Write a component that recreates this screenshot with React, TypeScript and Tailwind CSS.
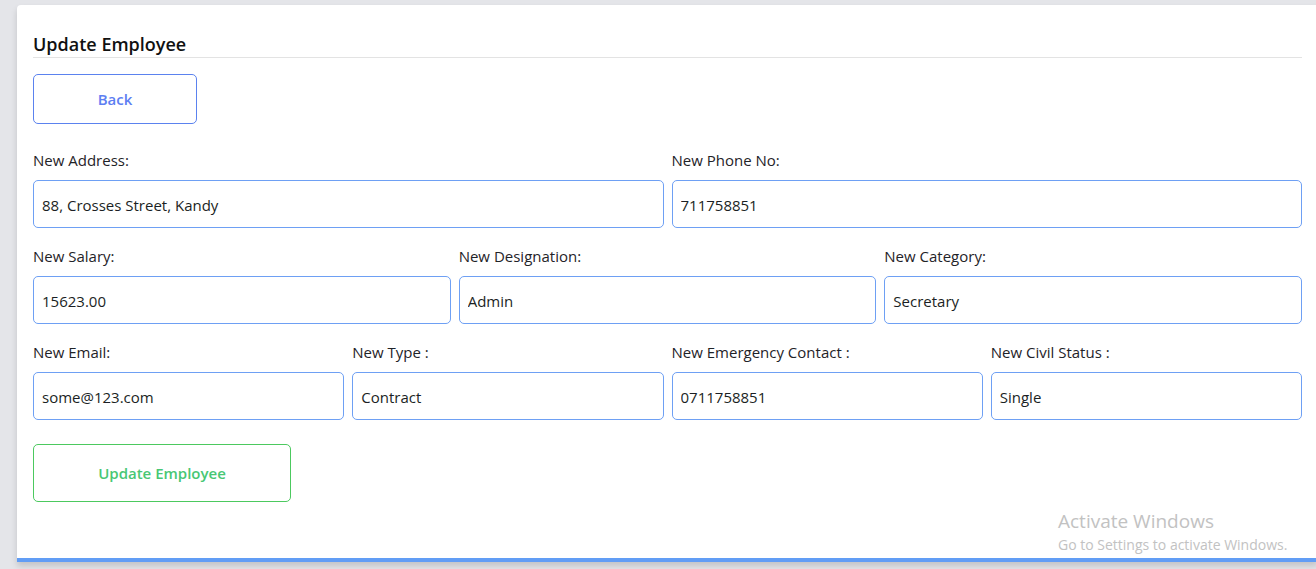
import React from "react";

type Field = { label: string; value: string };

const rows: Field[][] = [
  [
    { label: "New Address:", value: "88, Crosses Street, Kandy" },
    { label: "New Phone No:", value: "711758851" },
  ],
  [
    { label: "New Salary:", value: "15623.00" },
    { label: "New Designation:", value: "Admin" },
    { label: "New Category:", value: "Secretary" },
  ],
  [
    { label: "New Email:", value: "some@123.com" },
    { label: "New Type :", value: "Contract" },
    { label: "New Emergency Contact :", value: "0711758851" },
    { label: "New Civil Status :", value: "Single" },
  ],
];

const gridCols: Record<number, string> = {
  2: "grid-cols-2",
  3: "grid-cols-3",
  4: "grid-cols-4",
};

function FormField({ label, value }: Field) {
  return (
    <div className="flex flex-col">
      <label className="text-[15px] leading-5 text-[#1f2328] mb-[10px]">{label}</label>
      <input
        defaultValue={value}
        className="h-[48px] w-full rounded-[5px] border border-[#6ea0f4] bg-white px-[8px] pt-[1px] text-[15px] text-[#1b1f24] outline-none"
      />
    </div>
  );
}

export default function App() {
  return (
    <div
      className="w-[1316px] h-[569px] overflow-hidden bg-[#e4e5e9] pl-[17px] pt-[5px]"
      style={{ fontFamily: '"Open Sans", "Noto Sans", sans-serif' }}
    >
      <div className="relative w-[1301px] h-[557px] bg-white rounded-tl-[4px] border-b-4 border-[#619df5] shadow-[0_4px_6px_rgba(0,0,0,0.15)] px-4 pt-[27px]">
        <h1 className="text-[18px] leading-6 font-semibold text-[#111] pb-[1px] border-b border-[#e3e3e3]">
          Update Employee
        </h1>

        <button className="mt-4 w-[164px] h-[50px] rounded-[5px] border border-[#5b82ef] text-[15px] font-semibold text-[#5d7ef2] bg-white">
          Back
        </button>

        <div className="mt-[26px] flex flex-col gap-[18px]">
          {rows.map((row, i) => (
            <div key={i} className={`grid ${gridCols[row.length]} gap-x-[8px]`}>
              {row.map((f) => (
                <FormField key={f.label} {...f} />
              ))}
            </div>
          ))}
        </div>

        <button className="mt-[24px] w-[258px] h-[58px] rounded-[5px] border border-[#4cc95f] text-[15px] font-semibold text-[#48c774] bg-white">
          Update Employee
        </button>

        {/* windows watermark */}
        <div className="absolute left-[1041px] top-[505px] text-[#c2c2c2] leading-tight">
          <div className="text-[19px]">Activate Windows</div>
          <div className="text-[14px] mt-[2px]">Go to Settings to activate Windows.</div>
        </div>
      </div>
    </div>
  );
}
